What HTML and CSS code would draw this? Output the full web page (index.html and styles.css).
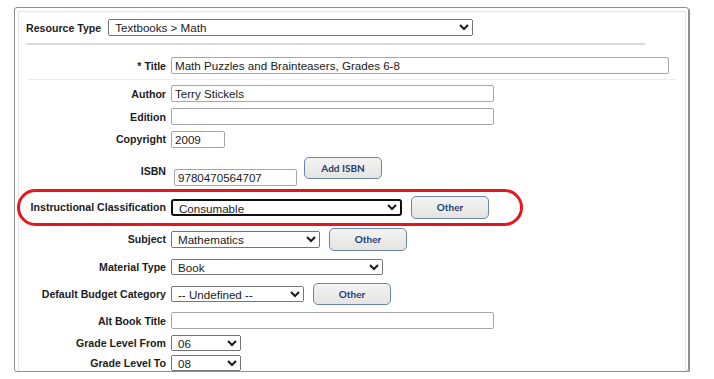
FILE: index.html
```html
<!DOCTYPE html>
<html>
<head>
<meta charset="utf-8">
<link rel="stylesheet" href="styles.css">
</head>
<body>
<div class="panel">
  <div class="inner">
    <div class="top-row">
      <label class="lbl">Resource Type</label>
      <select class="sel sel-resource"><option>Textbooks &gt; Math</option></select>
    </div>
    <div class="rule rule-strong"></div>
    <div class="title-row">
      <label class="lbl lbl-right">* Title</label>
      <input class="txt txt-title" type="text" value="Math Puzzles and Brainteasers, Grades 6-8">
    </div>
    <div class="rule rule-faint"></div>
    <div class="form-grid">
      <label class="lbl lbl-right">Author</label>
      <div class="cell"><input class="txt txt-wide" type="text" value="Terry Stickels"></div>

      <label class="lbl lbl-right">Edition</label>
      <div class="cell"><input class="txt txt-wide" type="text" value=""></div>

      <label class="lbl lbl-right">Copyright</label>
      <div class="cell"><input class="txt txt-year" type="text" value="2009"></div>

      <label class="lbl lbl-right">ISBN</label>
      <div class="cell">
        <input class="txt txt-isbn" type="text" value="9780470564707">
        <button class="btn btn-isbn" type="button">Add ISBN</button>
      </div>

      <label class="lbl lbl-right">Instructional Classification</label>
      <div class="cell">
        <select class="sel sel-instr sel-focus"><option>Consumable</option></select>
        <button class="btn btn-tall" type="button">Other</button>
      </div>

      <label class="lbl lbl-right">Subject</label>
      <div class="cell">
        <select class="sel sel-subject"><option>Mathematics</option></select>
        <button class="btn btn-tall" type="button">Other</button>
      </div>

      <label class="lbl lbl-right">Material Type</label>
      <div class="cell"><select class="sel sel-material"><option>Book</option></select></div>

      <label class="lbl lbl-right">Default Budget Category</label>
      <div class="cell">
        <select class="sel sel-budget"><option>-- Undefined --</option></select>
        <button class="btn" type="button">Other</button>
      </div>

      <label class="lbl lbl-right">Alt Book Title</label>
      <div class="cell"><input class="txt txt-wide" type="text" value=""></div>

      <label class="lbl lbl-right">Grade Level From</label>
      <div class="cell"><select class="sel sel-grade"><option>06</option></select></div>

      <label class="lbl lbl-right">Grade Level To</label>
      <div class="cell"><select class="sel sel-grade"><option>08</option></select></div>
    </div>
    <div class="highlight"></div>
  </div>
</div>
</body>
</html>
```

FILE: styles.css
```css
html, body {
  margin: 0;
  padding: 0;
  background: #ffffff;
}

body {
  font-family: "Liberation Sans", Arial, sans-serif;
  color: #1a1a1a;
}

.panel {
  margin: 7px 0 0 14px;
  width: 675px;
  height: 365px;
  box-sizing: border-box;
  border: 1px solid #8e8e8e;
  border-radius: 3px;
  box-shadow: 1px 1px 0 #8e8e8e;
  padding: 3px 2px 0 3px;
}

.inner {
  position: relative;
  height: 100%;
  box-sizing: border-box;
  border: 1px solid #e4e4e4;
  border-bottom: none;
  padding: 7px 0 0 7px;
}

.lbl {
  font-size: 10.6px;
  font-weight: bold;
  color: #1c1c1c;
  white-space: nowrap;
}

.lbl-right {
  text-align: right;
}

.top-row {
  display: flex;
  align-items: center;
  gap: 7px;
  height: 17px;
}

.rule {
  height: 0;
}

.rule-strong {
  margin-top: 7px;
  width: 619px;
  border-top: 2px solid #d9d9d9;
}

.title-row {
  display: grid;
  grid-template-columns: 140px auto;
  column-gap: 5px;
  align-items: center;
  margin-top: 12px;
  height: 17px;
}

.rule-faint {
  margin-top: 5px;
  margin-left: 2px;
  width: 648px;
  border-top: 1px solid #ececec;
}

.form-grid {
  display: grid;
  grid-template-columns: 140px auto;
  grid-template-rows: 23px 23px 22px 42px 30px 34px 21px 33px 21px 23px 18px;
  column-gap: 5px;
  align-items: center;
  margin-top: 2px;
}

.cell {
  display: flex;
  align-items: center;
}

.txt {
  box-sizing: border-box;
  height: 17px;
  margin: 0;
  padding: 0 3px;
  border: 1px solid #a6a6a6;
  border-radius: 2px;
  font-family: "Liberation Sans", Arial, sans-serif;
  font-size: 11.6px;
  color: #1a1a1a;
  background: #ffffff;
}

.txt-title { width: 498px; }
.txt-wide { width: 323px; }
.txt-year { width: 54px; }
.txt-isbn {
  width: 123px;
  margin: 13px 0 0 3px;
}

.sel {
  box-sizing: border-box;
  height: 16px;
  margin: 0;
  padding: 0 0 0 2px;
  font-family: "Liberation Sans", Arial, sans-serif;
  font-size: 11.6px;
  color: #1a1a1a;
}

.sel-resource { width: 365px; height: 17px; }
.sel-instr { width: 231px; height: 17px; }
.sel-subject { width: 149px; height: 17px; }
.sel-material { width: 212px; }
.sel-budget { width: 133px; }
.sel-grade { width: 70px; }

.sel-focus {
  border: 2px solid #111111;
  border-radius: 3px;
  background-color: #ffffff;
}

.btn {
  box-sizing: border-box;
  width: 78px;
  height: 22px;
  margin: 0 0 0 9px;
  padding: 0;
  border: 1px solid #6a84aa;
  border-radius: 5px;
  background: linear-gradient(#f3f3f1, #e4e4e2);
  font-family: Lato, "Liberation Sans", sans-serif;
  font-size: 10px;
  font-weight: bold;
  color: #1f3c7a;
}

.btn-tall {
  height: 23px;
}

.btn-isbn {
  margin: 0 0 6px 7px;
}

.highlight {
  position: absolute;
  left: -2px;
  top: 177px;
  width: 506px;
  height: 37px;
  box-sizing: border-box;
  border: 3px solid #e5161c;
  border-radius: 19px;
  pointer-events: none;
}
```
